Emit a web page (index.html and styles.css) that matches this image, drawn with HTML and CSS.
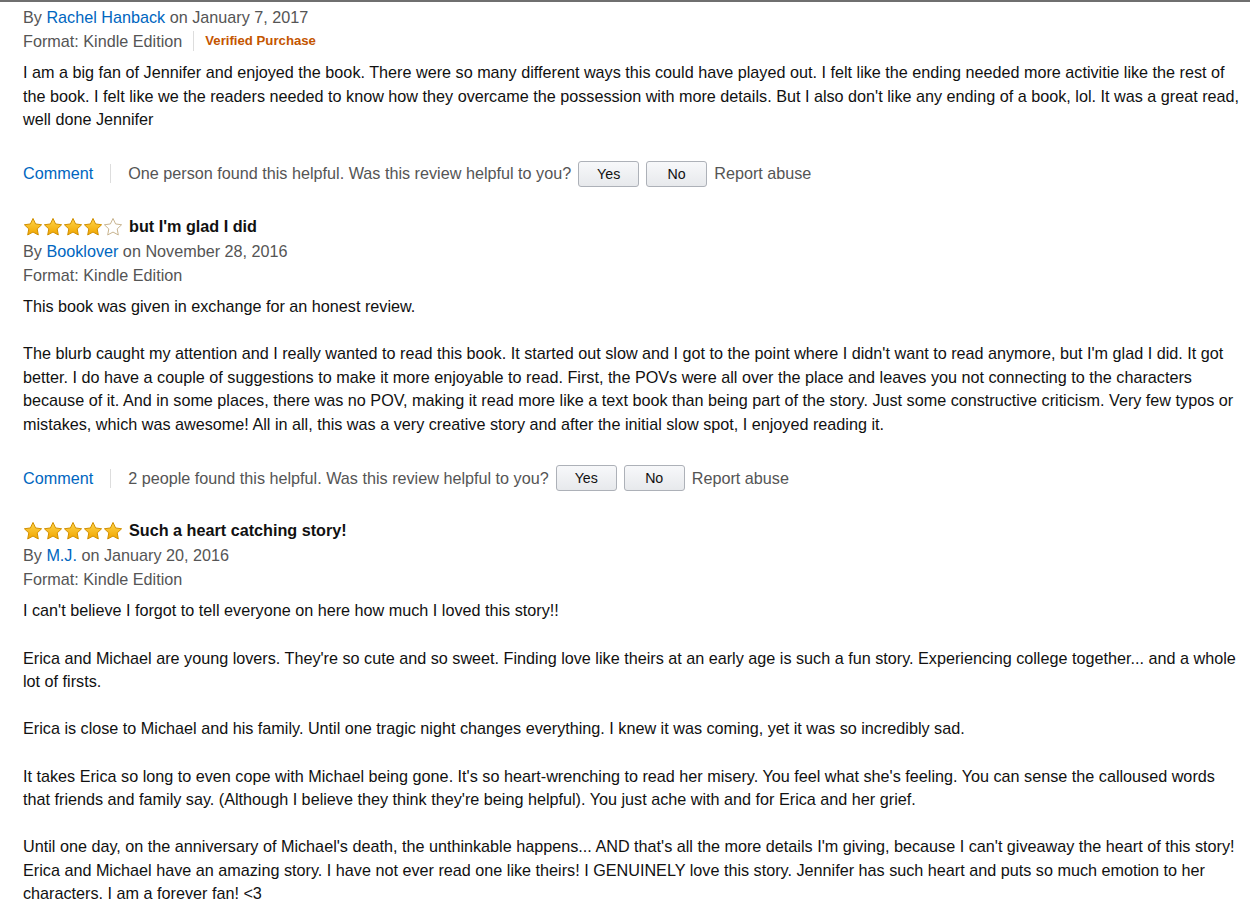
FILE: index.html
```html
<!DOCTYPE html>
<html>
<head>
<meta charset="utf-8">
<link rel="stylesheet" href="styles.css">
</head>
<body>
<div class="topline"></div>
<div class="reviews">
  <svg width="0" height="0" class="defs">
    <defs>
      <linearGradient id="g" x1="0" y1="0" x2="0" y2="1">
        <stop offset="0" stop-color="#ffd54a"/>
        <stop offset="1" stop-color="#f0a500"/>
      </linearGradient>
      <symbol id="star" viewBox="0 0 20 19">
        <path d="M10 1.2l2.6 5.5 6 .8-4.4 4.2 1.1 6-5.3-2.9-5.3 2.9 1.1-6L1.4 7.5l6-.8z" fill="url(#g)" stroke="#d08f00" stroke-width="1" stroke-linejoin="round"/>
      </symbol>
      <symbol id="star-empty" viewBox="0 0 20 19">
        <path d="M10 1.2l2.6 5.5 6 .8-4.4 4.2 1.1 6-5.3-2.9-5.3 2.9 1.1-6L1.4 7.5l6-.8z" fill="#fff" stroke="#c8b490" stroke-width="1" stroke-linejoin="round"/>
      </symbol>
    </defs>
  </svg>

  <div class="review">
    <div class="meta">By <a class="link" href="#">Rachel Hanback</a> on January 7, 2017</div>
    <div class="meta format-row"><span>Format: Kindle Edition</span><span class="sep"></span><span class="verified">Verified Purchase</span></div>
    <div class="body">I am a big fan of Jennifer and enjoyed the book. There were so many different ways this could have played out. I felt like the ending needed more activitie like the rest of the book. I felt like we the readers needed to know how they overcame the possession with more details. But I also don't like any ending of a book, lol. It was a great read, well done Jennifer</div>
    <div class="actions">
      <a class="link" href="#">Comment</a><span class="vsep"></span>
      <span class="helpful">One person found this helpful. Was this review helpful to you?</span>
      <button class="btn">Yes</button><button class="btn">No</button>
      <span class="report">Report abuse</span>
    </div>
  </div>

  <div class="review">
    <div class="title-row">
      <span class="stars">
        <svg class="star"><use href="#star"/></svg><svg class="star"><use href="#star"/></svg><svg class="star"><use href="#star"/></svg><svg class="star"><use href="#star"/></svg><svg class="star"><use href="#star-empty"/></svg>
      </span>
      <span class="title">but I'm glad I did</span>
    </div>
    <div class="meta">By <a class="link" href="#">Booklover</a> on November 28, 2016</div>
    <div class="meta">Format: Kindle Edition</div>
    <div class="body">This book was given in exchange for an honest review.<br><br>The blurb caught my attention and I really wanted to read this book. It started out slow and I got to the point where I didn't want to read anymore, but I'm glad I did. It got better. I do have a couple of suggestions to make it more enjoyable to read. First, the POVs were all over the place and leaves you not connecting to the characters because of it. And in some places, there was no POV, making it read more like a text book than being part of the story. Just some constructive criticism. Very few typos or mistakes, which was awesome! All in all, this was a very creative story and after the initial slow spot, I enjoyed reading it.</div>
    <div class="actions">
      <a class="link" href="#">Comment</a><span class="vsep"></span>
      <span class="helpful">2 people found this helpful. Was this review helpful to you?</span>
      <button class="btn">Yes</button><button class="btn">No</button>
      <span class="report">Report abuse</span>
    </div>
  </div>

  <div class="review">
    <div class="title-row">
      <span class="stars">
        <svg class="star"><use href="#star"/></svg><svg class="star"><use href="#star"/></svg><svg class="star"><use href="#star"/></svg><svg class="star"><use href="#star"/></svg><svg class="star"><use href="#star"/></svg>
      </span>
      <span class="title">Such a heart catching story!</span>
    </div>
    <div class="meta">By <a class="link" href="#">M.J.</a> on January 20, 2016</div>
    <div class="meta">Format: Kindle Edition</div>
    <div class="body">I can't believe I forgot to tell everyone on here how much I loved this story!!<br><br>Erica and Michael are young lovers. They're so cute and so sweet. Finding love like theirs at an early age is such a fun story. Experiencing college together... and a whole lot of firsts.<br><br>Erica is close to Michael and his family. Until one tragic night changes everything. I knew it was coming, yet it was so incredibly sad.<br><br>It takes Erica so long to even cope with Michael being gone. It's so heart-wrenching to read her misery. You feel what she's feeling. You can sense the calloused words that friends and family say. (Although I believe they think they're being helpful). You just ache with and for Erica and her grief.<br><br>Until one day, on the anniversary of Michael's death, the unthinkable happens... AND that's all the more details I'm giving, because I can't giveaway the heart of this story! Erica and Michael have an amazing story. I have not ever read one like theirs! I GENUINELY love this story. Jennifer has such heart and puts so much emotion to her characters. I am a forever fan! &lt;3</div>
  </div>
</div>
</body>
</html>
```

FILE: styles.css
```css
html, body {
  margin: 0;
  padding: 0;
  background: #fff;
}
body {
  font-family: "Liberation Sans", Arial, sans-serif;
  font-size: 16.2px;
  color: #111;
  overflow: hidden;
}
.topline {
  width: 1250px;
  height: 2px;
  background: #6f6f6f;
}
.defs {
  position: absolute;
}
.reviews {
  padding: 3px 0 0 23px;
  width: 1217px;
}
.review {
  display: flex;
  flex-direction: column;
}
.meta {
  color: #555;
  line-height: 24px;
}
.link {
  color: #0066c0;
  text-decoration: none;
}
.format-row {
  display: flex;
  align-items: center;
}
.sep {
  width: 1px;
  height: 20px;
  background: #ddd;
  margin: 0 11px 0 11px;
}
.verified {
  color: #c45500;
  font-weight: bold;
  font-size: 13.2px;
}
.body {
  margin-top: 8px;
  line-height: 23.6px;
}
.actions {
  display: flex;
  align-items: center;
  margin-top: 29px;
  height: 26px;
  margin-bottom: 27px;
}
.vsep {
  width: 1px;
  height: 19px;
  background: #ddd;
  margin: 0 17px 0 17px;
}
.helpful {
  color: #555;
  margin-right: 7px;
}
.btn {
  font-family: "Liberation Sans", Arial, sans-serif;
  font-size: 14.2px;
  color: #111;
  width: 61px;
  height: 26px;
  padding: 0;
  border: 1px solid #adb1b8;
  border-radius: 3px;
  background: linear-gradient(#f7f8fa, #e7e9ec);
  margin-right: 7px;
}
.report {
  color: #555;
}
.title-row {
  display: flex;
  align-items: center;
  height: 25px;
}
.stars {
  display: flex;
  margin-right: 6px;
}
.star {
  width: 20px;
  height: 19.5px;
}
.title {
  font-weight: bold;
  color: #111;
}
```
